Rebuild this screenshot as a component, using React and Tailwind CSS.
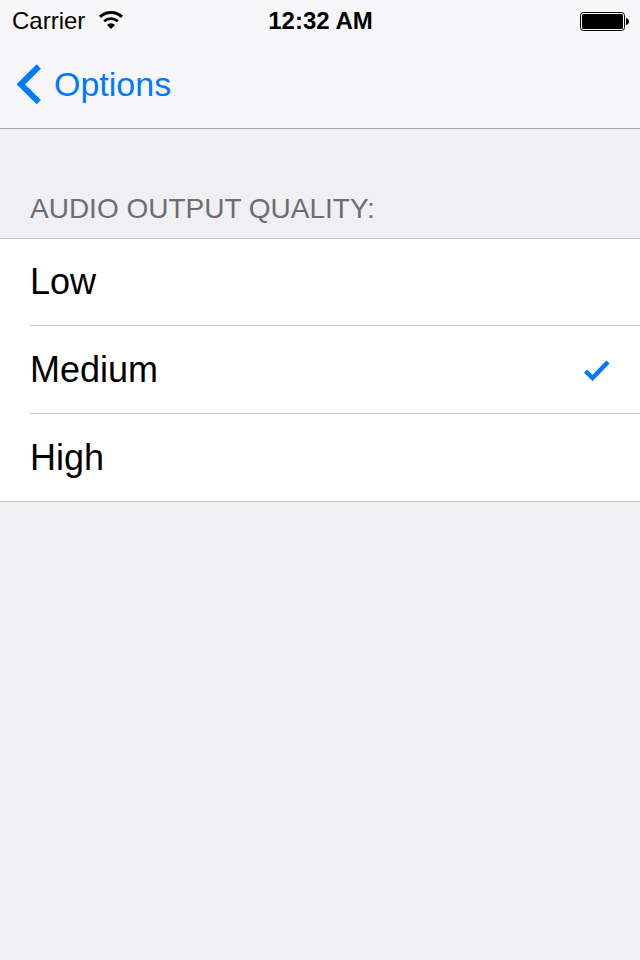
import React, { useState } from 'react';

const options = ['Low', 'Medium', 'High'];

function WifiIcon() {
  return (
    <svg width="28" height="20" viewBox="0 0 28 20" fill="none" stroke="black" aria-hidden="true">
      <path d="M3 5.900a16 16 0 0 1 22 0" strokeWidth="3" />
      <path d="M7.200 10.200a10 10 0 0 1 13.600 0" strokeWidth="2.800" />
      <path d="M10 13.900a6 6 0 0 1 8 0L14 18Z" fill="black" stroke="none" />
    </svg>
  );
}

function BatteryIcon() {
  return (
    <svg width="49" height="19" viewBox="0 0 49 19" aria-hidden="true">
      <rect x="0.5" y="0.5" width="44" height="18" rx="3" fill="white" stroke="black" />
      <rect x="2" y="2" width="41" height="15" rx="1.5" fill="black" />
      <path d="M46 6c4 .6 4 6.400 0 7Z" fill="black" />
    </svg>
  );
}

function StatusBar() {
  return (
    <div className="grid h-[42px] grid-cols-3 items-center pr-[11px] pl-3 text-2xl leading-7">
      <div className="flex items-center gap-3">
        <span>Carrier</span>
        <WifiIcon />
      </div>
      <span className="text-center font-bold whitespace-nowrap">12:32 AM</span>
      <div className="flex justify-end">
        <BatteryIcon />
      </div>
    </div>
  );
}

function NavBar() {
  return (
    <nav className="flex h-[86px] items-center px-4 pb-0.5">
      <button type="button" className="flex items-center gap-3 text-[34px] leading-10 text-[#007aff]">
        <svg width="26" height="40" viewBox="0 0 26 40" fill="none" aria-hidden="true">
          <path d="M22.800 2.500 4.800 20.300l18 17.800" stroke="currentColor" strokeWidth="6" />
        </svg>
        Options
      </button>
    </nav>
  );
}

function OptionRow({ label, checked, onChange }) {
  return (
    <li className="ml-[30px] h-22 border-b border-[#c8c7cc] first:h-[87px] last:ml-0 last:pl-[30px]">
      <label className="flex h-full cursor-pointer items-center justify-between pr-[30px] text-4xl leading-10">
        <input
          type="radio"
          name="quality"
          value={label}
          checked={checked}
          onChange={onChange}
          className="sr-only"
        />
        <span>{label}</span>
        {checked && (
          <svg width="27" height="22" viewBox="0 0 27 22" fill="none" aria-hidden="true">
            <path d="m2.500 12 7 7L25 3" stroke="#007aff" strokeWidth="4.500" />
          </svg>
        )}
      </label>
    </li>
  );
}

export default function App() {
  const [quality, setQuality] = useState('Medium');

  return (
    <div className="min-h-screen bg-[#efeff4] font-['Liberation_Sans',Arial,sans-serif] text-black">
      <header className="border-b border-[#a7a7aa] bg-[#f7f7f9]">
        <StatusBar />
        <NavBar />
      </header>
      <main>
        <fieldset>
          <legend className="px-[30px] pt-[63px] pb-3 text-[28px] leading-[34px] text-[#6d6d72] uppercase">
            Audio output quality:
          </legend>
          <ul className="border-t border-[#c8c7cc] bg-white">
            {options.map((label) => (
              <OptionRow
                key={label}
                label={label}
                checked={quality === label}
                onChange={() => setQuality(label)}
              />
            ))}
          </ul>
        </fieldset>
      </main>
    </div>
  );
}
